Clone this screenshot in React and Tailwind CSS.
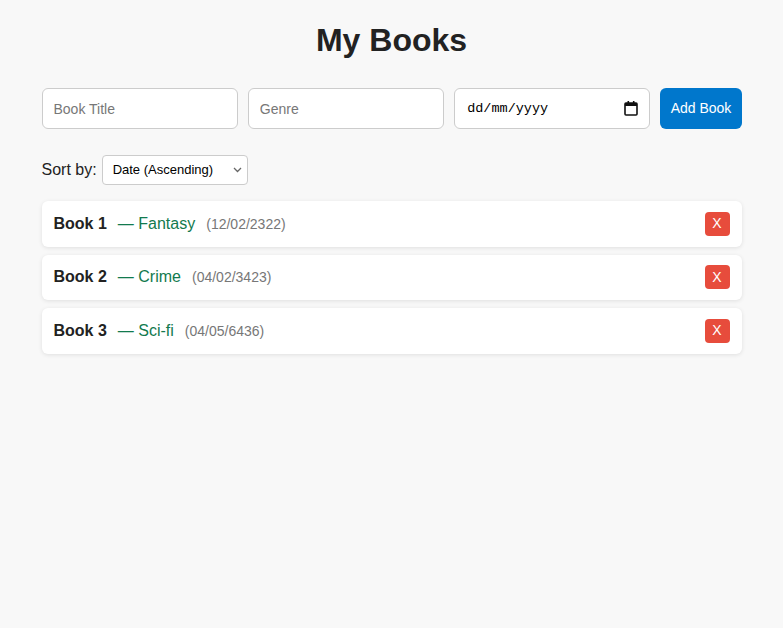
import React, { useState } from "react";

const books = [
  { id: 1, title: "Book 1", genre: "Fantasy", date: "12/02/2322" },
  { id: 2, title: "Book 2", genre: "Crime", date: "04/02/3423" },
  { id: 3, title: "Book 3", genre: "Sci-fi", date: "04/05/6436" },
];

const BookRow = ({ book }) => {
  return (
    <li className="flex items-center justify-between bg-white rounded-[6px] px-3 h-[45.5px] shadow-[0_1px_4px_rgba(0,0,0,0.1)]">
      <div className="flex items-baseline">
        <span className="font-bold text-[16px] text-[#222]">{book.title}</span>
        <span className="ml-[11px] text-[16px] text-[#127a4e]">— {book.genre}</span>
        <span className="ml-[11px] text-[14px] text-[#777]">({book.date})</span>
      </div>
      <button className="w-[25px] h-[24px] rounded-[4px] bg-[#e74c3c] text-white text-[14px] flex items-center justify-center">
        X
      </button>
    </li>
  );
};

export default function App() {
  const [sort, setSort] = useState("asc");

  return (
    <div className="min-h-[628px] bg-[#f8f8f8] font-['Liberation_Sans',Arial,sans-serif] text-[#222]">
      <div className="w-[700px] mx-auto pt-[22px]">
        <h1 className="text-[32px] font-bold text-center leading-[37px] text-[#222]">My Books</h1>

        <form className="flex gap-[10px] mt-[29px]" onSubmit={(e) => e.preventDefault()}>
          <div className="w-[196.33px] flex-none">
            <input
              type="text"
              placeholder="Book Title"
              className="w-full h-[41px] px-[11px] text-[14px] bg-white border border-[#ccc] rounded-[6px] placeholder:text-[#777] outline-none"
            />
          </div>
          <div className="w-[196.33px] flex-none">
            <input
              type="text"
              placeholder="Genre"
              className="w-full h-[41px] px-[11px] text-[14px] bg-white border border-[#ccc] rounded-[6px] placeholder:text-[#777] outline-none"
            />
          </div>
          <div className="w-[196.33px] flex-none relative">
            <input
              type="text"
              placeholder="dd/mm/yyyy"
              className="w-full h-[41px] pl-[12px] pr-[36px] text-[13.5px] font-['Liberation_Mono',monospace] bg-white border border-[#ccc] rounded-[6px] placeholder:text-black outline-none"
            />
            <svg
              className="absolute right-[12px] top-[13px] pointer-events-none"
              width="14"
              height="15"
              viewBox="0 0 14 15"
              fill="none"
            >
              <rect x="1" y="2" width="12" height="12" rx="1" stroke="#111" strokeWidth="1.6" />
              <rect x="1" y="2" width="12" height="3" fill="#111" />
              <rect x="3.5" y="0" width="1.6" height="3" fill="#111" />
              <rect x="8.9" y="0" width="1.6" height="3" fill="#111" />
            </svg>
          </div>
          <button className="flex-1 h-[41px] px-[10px] text-[14px] text-white bg-[#0077cc] rounded-[6px]">
            Add Book
          </button>
        </form>

        <div className="flex items-center mt-[26px]">
          <label htmlFor="sort" className="text-[16px] text-[#222]">Sort by:</label>
          <div className="relative ml-[5px]">
            <select
              id="sort"
              value={sort}
              onChange={(e) => setSort(e.target.value)}
              className="appearance-none h-[30px] w-[146px] pl-[10px] pr-[24px] text-[13px] bg-white border border-[#ccc] rounded-[4px] text-black outline-none"
            >
              <option value="asc">Date (Ascending)</option>
              <option value="desc">Date (Descending)</option>
            </select>
            <svg
              className="absolute right-[6px] top-[12px] pointer-events-none"
              width="9"
              height="6"
              viewBox="0 0 9 6"
              fill="none"
            >
              <path d="M1 1l3.5 3.5L8 1" stroke="#666" strokeWidth="1.3" />
            </svg>
          </div>
        </div>

        <ul className="flex flex-col gap-[8px] mt-[16px]">
          {books.map((book) => (
            <BookRow key={book.id} book={book} />
          ))}
        </ul>
      </div>
    </div>
  );
}
